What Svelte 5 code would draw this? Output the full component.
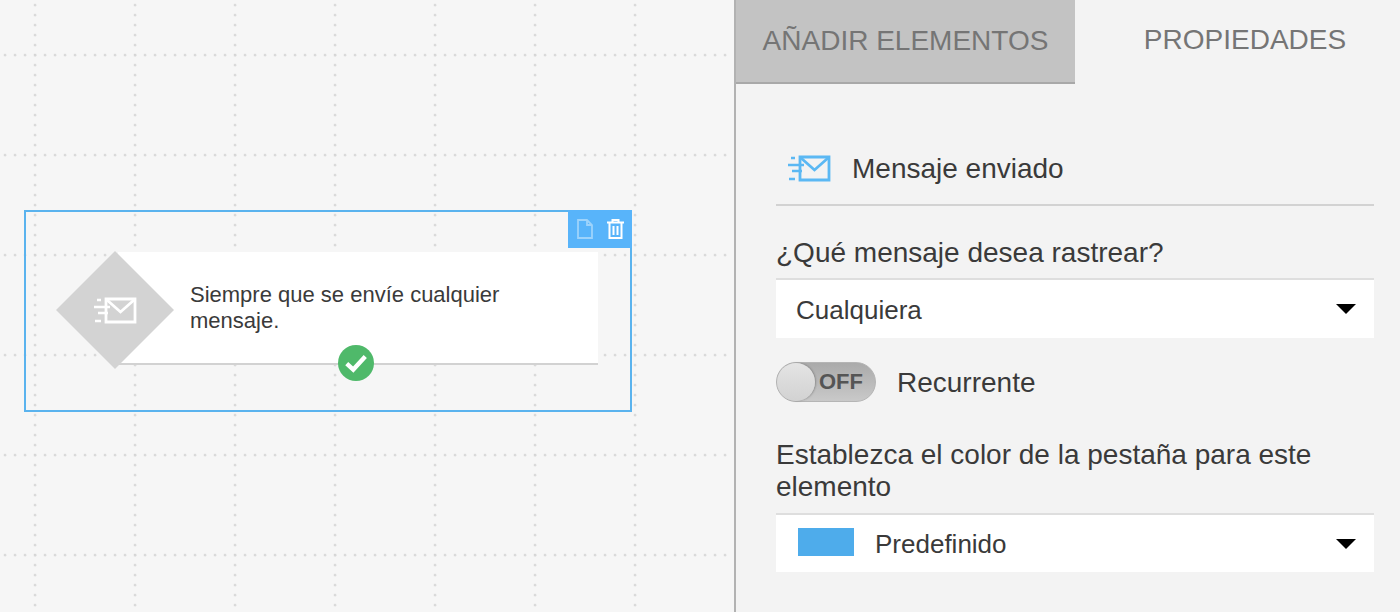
<script lang="ts">
  // Dot positions along one 100px tile of the canvas grid
  const steps = Array.from({ length: 10 }, (_, i) => i * 10);
</script>

{#snippet sentIcon()}
  <path d="M12 2h29v23H12z" fill="none" stroke="currentColor" stroke-width="2.8" />
  <path d="M13 3l13.5 12L40 3" fill="none" stroke="currentColor" stroke-width="2.8" />
  <path d="M3 3h4M0 10h16M4 16h10M1 24h6" fill="none" stroke="currentColor" stroke-width="2.4" />
{/snippet}

<div class="page">
  <section class="canvas">
    <svg class="grid" width="734" height="612" aria-hidden="true">
      <defs>
        <pattern id="dots" width="100" height="100" patternUnits="userSpaceOnUse" x="-65" y="-45">
          {#each steps as s}
            <circle cx="1.2" cy={s + 1.2} r="1.2" fill="#d2d2d2" />
            <circle cx={s + 1.2} cy="1.2" r="1.2" fill="#d2d2d2" />
          {/each}
        </pattern>
      </defs>
      <rect width="734" height="612" fill="url(#dots)" transform="translate(-1.2 -1.2)" />
    </svg>

    <div class="selection">
      <div class="tools">
        <svg width="16" height="20" viewBox="0 0 16 20" class="copy" aria-hidden="true">
          <path d="M1 1h9l5 5v13H1z M10 1v5h5" fill="none" stroke="currentColor" stroke-width="1.8" />
        </svg>
        <svg width="17" height="20" viewBox="0 0 17 20" aria-hidden="true">
          <path d="M0 3.5h17M5.5 3V1h6v2M2.5 4v15h12V4M6.5 7v9M10.5 7v9" fill="none" stroke="#fff" stroke-width="2" />
        </svg>
      </div>
      <div class="node">
        <div class="diamond">
          <svg class="diamond-icon" width="43" height="27" viewBox="0 0 43 27" aria-hidden="true">
            {@render sentIcon()}
          </svg>
        </div>
        <p>Siempre que se envíe cualquier mensaje.</p>
        <span class="check">
          <svg width="24" height="20" viewBox="0 0 22 18" aria-hidden="true">
            <path d="M2.5 9.5l6 5.5L19.5 3" fill="none" stroke="#fff" stroke-width="4" />
          </svg>
        </span>
      </div>
    </div>
  </section>

  <aside class="panel">
    <div class="tabs">
      <div class="tab active">AÑADIR ELEMENTOS</div>
      <div class="tab">PROPIEDADES</div>
    </div>
    <div class="body">
      <div class="title">
        <svg class="title-icon" width="43" height="27" viewBox="0 0 43 27" aria-hidden="true">
          {@render sentIcon()}
        </svg>
        <span>Mensaje enviado</span>
      </div>
      <div class="label first">¿Qué mensaje desea rastrear?</div>
      <div class="select tall">
        <span>Cualquiera</span>
        <i class="caret"></i>
      </div>
      <div class="toggle-row">
        <div class="toggle">
          <span class="knob"></span>
          <b>OFF</b>
        </div>
        <span class="toggle-label">Recurrente</span>
      </div>
      <div class="label second">Establezca el color de la pestaña para este elemento</div>
      <div class="select">
        <span class="swatch"></span>
        <span>Predefinido</span>
        <i class="caret"></i>
      </div>
    </div>
  </aside>
</div>

<style>
  :global(body) {
    margin: 0;
  }

  .page {
    display: flex;
    width: 1400px;
    height: 612px;
    overflow: hidden;
    font-family: "Liberation Sans", Arial, sans-serif;
    color: #3a3a3a;
  }

  .canvas {
    position: relative;
    width: 734px;
    flex: none;
    background: #f6f6f6;
  }

  .grid {
    position: absolute;
    inset: 0;
  }

  .selection {
    position: absolute;
    left: 24px;
    top: 210px;
    width: 604px;
    height: 198px;
    border: 2px solid #5ab3ee;
  }

  .tools {
    position: absolute;
    top: -2px;
    right: -2px;
    width: 64px;
    height: 38px;
    display: flex;
    align-items: center;
    justify-content: center;
    gap: 14px;
    background: #58b4fa;
  }

  .copy {
    color: #9dd3fb;
  }

  .node {
    position: absolute;
    left: 92px;
    top: 40px;
    width: 480px;
    height: 111px;
    background: #fff;
    border-bottom: 2px solid #d2d2d2;
    display: flex;
    align-items: center;
  }

  .node p {
    margin: 0 0 0 72px;
    width: 340px;
    font-size: 22px;
    line-height: 26px;
    color: #3a3a3a;
  }

  .diamond {
    position: absolute;
    left: -62px;
    top: -1px;
    width: 118px;
    height: 118px;
    background: #d3d3d3;
    clip-path: polygon(50% 0, 100% 50%, 50% 100%, 0 50%);
    display: flex;
    align-items: center;
    justify-content: center;
    color: #fff;
  }

  .check {
    position: absolute;
    left: 220px;
    top: 93px;
    width: 36px;
    height: 36px;
    border-radius: 50%;
    background: #4fb96a;
    display: flex;
    align-items: center;
    justify-content: center;
  }

  .panel {
    flex: 1;
    min-width: 0;
    background: #f3f3f3;
    border-left: 2px solid #b2b2b2;
  }

  .tabs {
    display: flex;
    height: 84px;
  }

  .tab {
    flex: none;
    display: flex;
    align-items: center;
    justify-content: center;
    width: 340px;
    height: 80px;
    font-size: 28px;
    color: #757575;
  }

  .tab.active {
    width: 339px;
    height: 82px;
    background: #c3c3c3;
    border-bottom: 2px solid #a8a8a8;
  }

  .body {
    padding: 0 26px 0 40px;
  }

  .title {
    display: flex;
    align-items: center;
    height: 71px;
    padding-top: 49px;
    border-bottom: 2px solid #d2d2d2;
    font-size: 28px;
  }

  .title-icon {
    margin: -1px 21px 0 12px;
    color: #5bb8f3;
  }

  .label {
    font-size: 28px;
    line-height: 32px;
  }

  .label.first {
    margin-top: 31px;
    margin-bottom: 9px;
  }

  .label.second {
    margin-top: 37px;
    margin-bottom: 10px;
  }

  .select {
    position: relative;
    display: flex;
    align-items: center;
    box-sizing: border-box;
    height: 59px;
    padding: 2px 0 0 20px;
    background: #fff;
    border-top: 2px solid #dedede;
    font-size: 26px;
  }

  .select.tall {
    height: 60px;
    padding-top: 3px;
  }

  .swatch {
    width: 56px;
    height: 28px;
    margin: -6px 21px 0 2px;
    background: #4eaceb;
  }

  .caret {
    position: absolute;
    right: 18px;
    top: 24px;
    border-left: 10px solid transparent;
    border-right: 10px solid transparent;
    border-top: 10px solid #000;
  }

  .toggle-row {
    display: flex;
    align-items: center;
    gap: 21px;
    height: 40px;
    margin-top: 24px;
    font-size: 28px;
  }

  .toggle-label {
    padding-top: 2px;
  }

  .toggle {
    position: relative;
    width: 100px;
    height: 40px;
    box-sizing: border-box;
    border-radius: 20px;
    border: 1px solid #b5b5b5;
    background: linear-gradient(#aaa, #c9c9c9);
    display: flex;
    align-items: center;
    justify-content: flex-end;
    padding-right: 12px;
  }

  .toggle b {
    font-size: 22px;
    color: #555;
  }

  .knob {
    position: absolute;
    left: 0;
    top: 0;
    width: 38px;
    height: 38px;
    border-radius: 50%;
    background: linear-gradient(#e4e4e4, #d2d2d2);
    box-shadow: 1px 0 2px rgba(0, 0, 0, 0.25);
  }
</style>
